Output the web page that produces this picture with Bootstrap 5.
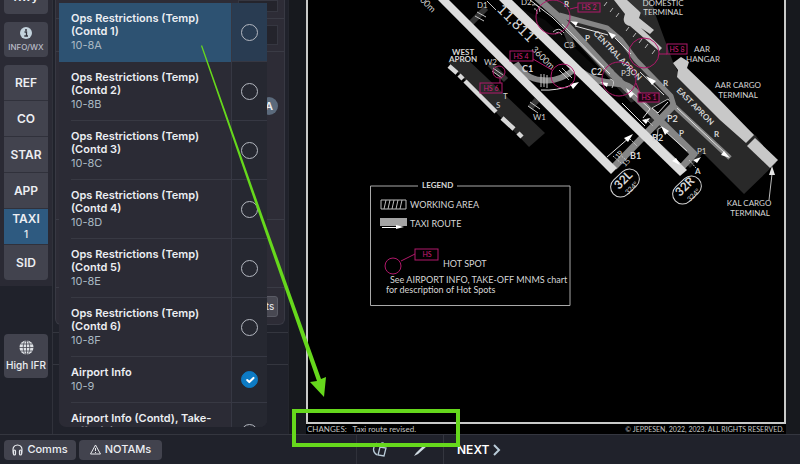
<!DOCTYPE html>
<html lang="en" data-bs-theme="dark">
<head>
<meta charset="utf-8">
<meta name="viewport" content="width=device-width, initial-scale=1">
<title>Airport charts</title>
<link href="https://cdn.jsdelivr.net/npm/bootstrap@5.3.0/dist/css/bootstrap.min.css" rel="stylesheet">
<style>
body{font-family:Inter,sans-serif;font-size:12px;line-height:13px;background:#20222b;color:#eceef2}
.app-shell{height:100vh}
.min-h-0{min-height:0}
/* chart category rail */
.rail{width:53px;border-right:1px solid #30323b}
.rail-top{background:#2a2a34;padding:0 4px 6px;gap:8px;margin-top:-21px}
.key-btn{background:#42434e;color:#eceef2;border:0;border-radius:4px;padding:0;font-size:12px;line-height:13px;font-weight:600;width:44px;height:35px}
.key-btn:hover{background:#4b4c58;color:#fff}
.key-btn small{font-size:8px;line-height:9px;font-weight:500;color:#b9bcc6}
.key-group{border-radius:4px;overflow:hidden;gap:1px;background:#30313b}
.key-group .key-btn{border-radius:0;height:35px}
.key-group .key-btn.current{background:#2e5a80;gap:3px}
.current span{font-size:10px;font-weight:500}
.rail .ifr-btn{height:44px;margin:48px 4px 0;font-size:10px;font-weight:500}
/* flight panel behind the list */
.flight{width:236px;border-right:1px solid #24262e}
.flight-card{background:#2d2c36;margin:0 3px 0 2px;border:1px solid #383943;border-top:0;border-radius:0 0 6px 6px}
.flight-card>div{border-bottom:1px solid #3a3b45;padding:0 6px}
.flight-card>div:last-child{border:0}
.h-a{height:19px}.h-b{height:33px}.h-c{height:168px}.h-d{height:68px}.h-e{height:36px}
.slot{background:#24242c;border:1px solid #363741;width:40px;height:20px}
.slot-cut{height:12px}
.dot-a{width:18px;height:18px;border-radius:9px;background:#5b6a7c;font-size:11px;font-weight:600;margin:45px 0 0}
.more-btn{height:21px;width:44px;background:#484852;border:1px solid #5a5b65;border-radius:3px;color:#eceef2;padding:0 8px;font-size:10px;line-height:13px}
.strip{height:33px;margin-top:7px;border:1px solid #34363f;border-width:1px 0}
/* chart picker */
.picker{position:absolute;left:59px;top:3px;width:208px;height:424px;font-size:11px;background:#2b2b35;border-radius:0 0 7px 7px;overflow:hidden}
.pick-row{cursor:pointer}
.pick-text{padding:9px 0 8px;margin-left:12px;border-bottom:1px solid #383943;font-weight:600}
.pick-text span{display:block}
.pick-text .code{font-weight:400;line-height:15px;color:#a9b8c2}
.pick-check{width:36px;background:#262831;border-left:1px solid #363843;border-bottom:1px solid #363843}
.pick-row.active-row{background:#2d5272}
.active-row .pick-text{border-color:#2d5272}
.active-row .pick-check{background:#293c52}
.pick-check .form-check-input{width:17px;height:17px;margin:0;border:1px solid #b4b8c0;background-color:transparent;border-radius:50%}
.pick-check .form-check-input:checked{background-color:#0d7bc4;border-color:#0d7bc4;background-size:14px}
/* chart */
.chart-area{background:#17191e;padding:0 14px 0 17px;min-width:0}
.chart-frame{background:#000;border:2px solid #c9cac9;border-top:0}
.chart-frame svg{display:block;width:100%;height:100%}
.chart-note{background:#000;font-family:Lato,sans-serif;font-size:7px;line-height:9px;padding:1px 2px 0 1px;color:#c4c5c4}
.chart-note .revision{font-size:8px}
/* bottom bar */
.bottom-bar{height:30px;border-top:1px solid #34363f;background:#20222b}
.bar-left{width:357px;padding:0 4px;gap:3px;border-right:1px solid #2f313a}
.bar-mid{width:87px;gap:26px;border-right:1px solid #34363f}
.bar-left .key-btn{height:20px;width:auto;font-size:11px;font-weight:500}
.bar-left .comms{width:72px}.bar-left .notams{width:83px}
.next-btn{background:none;border:0;color:#fff;font-size:12px;font-weight:600;padding:0 13px;gap:4px}
.markup{position:absolute;inset:0;width:100%;height:100%;pointer-events:none}
</style>
<script src="https://cdn.jsdelivr.net/npm/bootstrap@5.3.0/dist/js/bootstrap.bundle.min.js"></script>
</head>
<body>
<div class="app-shell d-flex flex-column position-relative overflow-hidden">
<main class="d-flex flex-grow-1 min-h-0 overflow-hidden">
  <nav class="rail flex-shrink-0" aria-label="Chart types">
    <div class="rail-top d-flex flex-column">
      <button class="btn key-btn">Rwy</button>
      <button class="btn key-btn d-flex flex-column align-items-center justify-content-center gap-1">
        <svg width="12" height="12" viewBox="0 0 12 12" aria-hidden="true"><circle cx="6" cy="6" r="6" fill="#c3d2dc"/><circle cx="6" cy="3" r="1" fill="#34353f"/><path d="M4.5 5H6.5V9M4.3 9H8" stroke="#34353f" stroke-width="1.3" fill="none"/></svg>
        <small>INFO/WX</small></button>
      <div class="key-group d-flex flex-column">
        <button class="btn key-btn">REF</button>
        <button class="btn key-btn">CO</button>
        <button class="btn key-btn">STAR</button>
        <button class="btn key-btn">APP</button>
        <button class="btn key-btn current d-flex flex-column align-items-center justify-content-center">TAXI<span>1</span></button>
        <button class="btn key-btn">SID</button>
      </div>
    </div>
    <button class="btn key-btn ifr-btn d-flex flex-column align-items-center justify-content-center gap-1">
      <svg width="15" height="15" viewBox="0 0 15 15" aria-hidden="true"><circle cx="7.500" cy="7.500" r="7" fill="#dfe2e6"/><g fill="none" stroke="#454650" stroke-width=".8"><ellipse cx="7.500" cy="7.500" rx="3.300" ry="7"/><path d="M7.500 0V15M0 7.500H15M1.500 4H13.500M1.500 11H13.500"/></g></svg>
      High IFR</button>
  </nav>

  <section class="flight flex-shrink-0" aria-label="Flight">
    <div class="flight-card">
      <div class="h-a d-flex justify-content-end"><span class="slot slot-cut"></span></div>
      <div class="h-b d-flex justify-content-end align-items-center"><span class="slot"></span></div>
      <div class="h-c d-flex justify-content-end"><span class="dot-a d-flex align-items-center justify-content-center">A</span></div>
      <div class="h-d"></div>
      <div class="h-e d-flex justify-content-end align-items-center"><button class="more-btn text-end">Charts</button></div>
    </div>
    <div class="strip"></div>
  </section>

  <section class="chart-area flex-grow-1 d-flex flex-column" aria-label="Taxi chart">
    <div class="chart-frame flex-grow-1 min-h-0">
    <svg viewBox="308 0 476 422" preserveAspectRatio="xMinYMin meet" font-family="Lato, sans-serif" font-size="8" fill="#d6d6d6">
      <!-- aprons -->
      <path d="M538 0H650L673 62L680 76L756 136L776 163L744 194L703 153L690 168Z" fill="#292929"/>
      <path d="M448 62L466 58L545 133L529 147Z" fill="#282828"/>
      <!-- black islands between taxiways -->
      <path d="M545 20L605 76L598 82L520 8Z" fill="#0a0a0a"/>
      <g fill="#050505" stroke="#b8b8b8" stroke-width="1"><path d="M652 108L668 99Q672 102 671 106L660 116Z"/><path d="M658 129L664 126L689 150L690 158L683 166L657 141Z"/></g>
      <path d="M641 98L656 112L645 124L626 105Z" fill="#050505"/>
      <!-- taxiways -->
      <path d="M470 24L486 8M566 31L573 48M530 108L537 100M490 64L506 80" fill="none" stroke="#353535" stroke-width="6"/>
      <g fill="none" stroke="#858585" stroke-linejoin="round">
        <path d="M535 -4L561 19L611 73L653 114L694 154L682 167" stroke-width="7"/>
        <path d="M559 15L607 28L621 40L636 60L671 96L674 106L730 158" stroke-width="5"/>
        <path d="M614 167L642 138L674 105" stroke-width="7"/>
        <path d="M516 63Q526 79 541 80Q558 83 575 69" stroke-width="6"/>
        <path d="M578 70Q596 83 614 83Q629 83 640 97" stroke-width="7"/>
        <path d="M622 80Q614 79 611 70" stroke-width="4"/>
      </g>
      <!-- runways -->
      <g fill="#dcdcdc"><path d="M437 -1H448L617 168L611 174Z"/><path d="M498 -1H511L687 170L680 176Z"/></g>
      <!-- buildings -->
      <g fill="#c8c8c8"><path d="M681 57L689 62L687 68L710 90L754 135L746 143L720 120L677 77L678 70L673 63Z"/><path d="M755 138L778 160L770 168L747 146Z"/>
      <path d="M614 0H628L641 12L639 18L654 30L650 34L641 28L662 48L659 51L630 26Q621 24 625 14Z"/></g>
      <path d="M627 0H649L655 10L645 17L638 10Z" fill="#333"/>
      <g stroke="#d8d8d8" stroke-width="4.500" fill="none"><path d="M449 66L457 73M459 75L463 79M465 81L496 112M502 118L514 129M518 133L522 137"/></g>
      <g stroke="#bbb" stroke-width="1"><path d="M607 2L604 6M613 8L610 12M619 13L616 17M629 27L626 31M636 33L633 37M642 39L639 43M648 44L645 48M655 50L652 54"/></g>
      <!-- taxi routes -->
      <g fill="none" stroke="#e1e1e1" stroke-width="1">
        <path d="M530 0L552 17L610 74M562 24L604 67M575 26L608 35M615 38L631 54M640 72L664 95M668 102L658 113L652 108M677 108L726 154M658 145L677 162M666 132L687 151M630 90L650 109L643 118M607 157L630 137M541 90Q557 91 572 85M622 103L645 126"/>
      </g>
      <g fill="#fff"><path d="M570 21L578 22L576 26ZM608 32L616 35L612 39ZM646 76L656 81L652 85ZM579 82L570 84L573 89ZM600 82L608 83L607 87ZM626 88L634 94L630 98ZM633 134L624 138L628 142ZM650 118L642 120L646 124ZM661 126L669 131L665 135ZM730 158L721 155L724 151ZM680 165L672 161L676 158ZM701 157L693 160L697 163Z"/></g>
      <!-- holding marks -->
      <g fill="none" stroke="#c4c4c4" stroke-width="1"><path d="M477 12L486 17M475 16L484 21M487 1L496 10M493 68L503 75M492 71L502 78M530 102L540 109M528 106L538 113M541 74V87M544 74V87M547 75V88M532 5Q539 3 540 12M534 9Q537 8 537 14M553 32Q559 26 564 33M555 34Q559 30 562 35M610 79Q616 80 612 88M559 70L569 80M562 68L572 78"/><path d="M613 156L622 164M617 152L626 160M630 139L637 146M646 119L653 126M689 160L696 168" stroke-dasharray="2 1"/></g>
      <!-- taxiway names -->
      <g font-size="8"><text x="477" y="8">D1</text><text x="521" y="5">D2</text><text x="564" y="48">C3</text><text x="484" y="65">W2</text><text x="533" y="120">W1</text><text x="503" y="99">T</text><text x="496" y="108">S</text><text x="621" y="76">P3</text><text x="697" y="154">P1</text></g>
      <g font-weight="700" font-size="9"><text x="522" y="72">C1</text><text x="591" y="75">C2</text><text x="630" y="159">B1</text><text x="652" y="141">B2</text><text x="667" y="122">P2</text></g>
      <g font-weight="700" font-size="8"><text x="585" y="41">P</text><text x="679" y="136">P</text><text x="564" y="7">R</text><text x="663" y="86">R</text><text x="714" y="137">R</text><text x="695" y="174">A</text>
        <text transform="translate(593 34) rotate(46)">CENTRAL APRON</text>
        <text transform="translate(676 91) rotate(45)">EAST APRON</text>
        <text x="452" y="55">WEST</text><text x="449" y="62">APRON</text></g>
      <text transform="translate(496 10) rotate(45)" font-size="15">11,811’</text>
      <text transform="translate(531 50) rotate(45)" font-size="9">3600m</text>
      <text transform="translate(412 -7) rotate(45)" font-size="9">3200m</text>
      <!-- runway ends -->
      <g fill="none" stroke="#d4d4d4" stroke-width="1"><rect x="-16" y="-10" width="32" height="20" rx="10" transform="translate(625 183) rotate(-43)"/><rect x="-16" y="-10" width="32" height="20" rx="10" transform="translate(687 190) rotate(-43)"/></g>
      <text transform="translate(619 190) rotate(-45)" font-size="12" font-weight="700">32L</text>
      <text transform="translate(680 197) rotate(-45)" font-size="12" font-weight="700">32R</text>
      <text transform="translate(628 195) rotate(-45)" font-size="7">324°</text><text transform="translate(690 202) rotate(-45)" font-size="7">324°</text>
      <g font-size="7"><text transform="translate(618 159) rotate(-45)">19</text><text transform="translate(625 167) rotate(-45)">15</text></g>
      <!-- buildings, names -->
      <g text-anchor="middle"><text x="663" y="6">DOMESTIC</text><text x="663" y="15">TERMINAL</text><text x="702" y="52">AAR</text><text x="703" y="62">HANGAR</text><text x="738" y="88">AAR CARGO</text><text x="738" y="98">TERMINAL</text><text x="749" y="206">KAL CARGO</text><text x="750" y="216">TERMINAL</text></g>
      <path d="M769 200L772 174" stroke="#bbb"/><path d="M772 166L775 175H769Z" fill="#e4e4e4"/>
      <!-- hot spots -->
      <g fill="none" stroke="#b0186a" stroke-width="1"><circle cx="553" cy="17" r="17"/><circle cx="644" cy="53" r="15"/><circle cx="563" cy="76" r="12"/><circle cx="499" cy="72" r="6"/><circle cx="619" cy="79" r="17"/><circle cx="393" cy="266" r="8"/>
        <path d="M570 9L578 7M659 54H667M533 59L552 70M500 78V83M636 83L640 93M401 261L415 254"/>
        <rect x="578" y="3" width="22" height="9"/><rect x="667" y="44" width="20" height="10"/><rect x="510" y="51" width="23" height="10"/><rect x="480" y="83" width="22" height="10"/><rect x="638" y="93" width="21" height="9" fill="#1d0812"/><rect x="415" y="249" width="23" height="11"/></g>
      <g fill="#cc1d78" font-size="7" text-anchor="middle"><text x="589" y="10">HS 2</text><text x="677" y="52">HS 8</text><text x="521" y="59">HS 4</text><text x="491" y="91">HS 6</text><text x="649" y="100">HS 1</text><text x="427" y="257">HS</text></g>
      <!-- legend -->
      <path d="M418 186H370.500V305.500H570V186H457" fill="none" stroke="#a9a9a9"/>
      <text x="422" y="188" font-size="8" font-weight="700">LEGEND</text>
      <path d="M381 200H406V209H381ZM386 200L384 209M390 200L388 209M394 200L392 209M398 200L396 209M402 200L400 209" fill="none" stroke="#bdbdbd"/>
      <path d="M380 218H407V226H380Z" fill="#a4a4a4"/><path d="M382 227H396V225L404 227L396 229V228H382Z" fill="#fff"/>
      <g font-size="9"><text x="410" y="208">WORKING AREA</text><text x="410" y="227">TAXI ROUTE</text><text x="443" y="267">HOT SPOT</text><text x="390" y="283">See AIRPORT INFO, TAKE-OFF MNMS chart</text><text x="386" y="293">for description of Hot Spots</text></g>
    </svg>
    </div>
    <div class="chart-note d-flex justify-content-between"><span class="revision">CHANGES:&ensp; Taxi route revised.</span><span>© JEPPESEN, 2022, 2023. ALL RIGHTS RESERVED.</span></div>
  </section>
</main>

<footer class="bottom-bar d-flex flex-shrink-0">
  <div class="bar-left d-flex align-items-center">
    <button class="btn key-btn comms d-flex align-items-center justify-content-center gap-1"><svg width="11" height="12" viewBox="0 0 11 12" fill="none" stroke="#e6e8ec" stroke-width="1.200" aria-hidden="true"><path d="M1.500 10Q-.5 1 5.500 1Q11.500 1 9.500 10"/><rect x="1.500" y="6" width="2" height="5" rx="1"/><rect x="7.500" y="6" width="2" height="5" rx="1"/></svg>Comms</button>
    <button class="btn key-btn notams d-flex align-items-center justify-content-center gap-1"><svg width="11" height="11" viewBox="0 0 11 11" fill="none" stroke="#e6e8ec" stroke-linejoin="round" aria-hidden="true"><path d="M5.500 1L10.500 10H.5ZM5.500 4V7M5.500 8V9"/></svg>NOTAMs</button>
  </div>
  <div class="bar-mid d-flex align-items-center justify-content-center">
    <svg width="16" height="16" viewBox="0 0 16 16" fill="none" stroke="#b9cbd8" stroke-width="1.300" aria-label="Rotate"><path d="M5 1Q-2 8 5 13M8 5L14 6L12 14L6 13ZM8 5Q8 1 11 1L11 5"/></svg>
    <svg width="14" height="16" viewBox="0 0 14 16" fill="#d0dbe3" aria-label="Draw"><path d="M0 14L2 11L11 2L13 4L4 12Z"/></svg>
  </div>
  <button class="next-btn d-flex align-items-center">NEXT<svg width="8" height="12" viewBox="0 0 8 12" fill="none" stroke="#b9cbd8" stroke-width="2" aria-hidden="true"><path d="M1 1L6 6L1 11"/></svg></button>
</footer>

<div class="picker">
  <label class="pick-row active-row d-flex"><span class="pick-text flex-grow-1"><span>Ops Restrictions (Temp)<br>(Contd 1)</span><span class="code">10-8A</span></span><span class="pick-check d-flex align-items-center justify-content-center"><input class="form-check-input" type="checkbox"></span></label>
  <label class="pick-row d-flex"><span class="pick-text flex-grow-1"><span>Ops Restrictions (Temp)<br>(Contd 2)</span><span class="code">10-8B</span></span><span class="pick-check d-flex align-items-center justify-content-center"><input class="form-check-input" type="checkbox"></span></label>
  <label class="pick-row d-flex"><span class="pick-text flex-grow-1"><span>Ops Restrictions (Temp)<br>(Contd 3)</span><span class="code">10-8C</span></span><span class="pick-check d-flex align-items-center justify-content-center"><input class="form-check-input" type="checkbox"></span></label>
  <label class="pick-row d-flex"><span class="pick-text flex-grow-1"><span>Ops Restrictions (Temp)<br>(Contd 4)</span><span class="code">10-8D</span></span><span class="pick-check d-flex align-items-center justify-content-center"><input class="form-check-input" type="checkbox"></span></label>
  <label class="pick-row d-flex"><span class="pick-text flex-grow-1"><span>Ops Restrictions (Temp)<br>(Contd 5)</span><span class="code">10-8E</span></span><span class="pick-check d-flex align-items-center justify-content-center"><input class="form-check-input" type="checkbox"></span></label>
  <label class="pick-row d-flex"><span class="pick-text flex-grow-1"><span>Ops Restrictions (Temp)<br>(Contd 6)</span><span class="code">10-8F</span></span><span class="pick-check d-flex align-items-center justify-content-center"><input class="form-check-input" type="checkbox"></span></label>
  <label class="pick-row d-flex"><span class="pick-text flex-grow-1"><span>Airport Info</span><span class="code">10-9</span></span><span class="pick-check d-flex align-items-center justify-content-center"><input class="form-check-input" type="checkbox" checked></span></label>
  <label class="pick-row d-flex"><span class="pick-text flex-grow-1"><span>Airport Info (Contd), Take-</span><span>Off Minimums</span><span class="code">10-9A</span></span><span class="pick-check d-flex align-items-center justify-content-center"><input class="form-check-input" type="checkbox"></span></label>
</div>

<svg class="markup" viewBox="0 0 800 464" preserveAspectRatio="none" aria-hidden="true">
  <path d="M201 46L202 45L264 220L321 379L326 377L324 397L310 382L317 381L261 220Z" fill="#66d81c"/>
  <rect x="294" y="411" width="164" height="34" fill="none" stroke="#66d81c" stroke-width="4"/>
</svg>
</div>
</body>
</html>
